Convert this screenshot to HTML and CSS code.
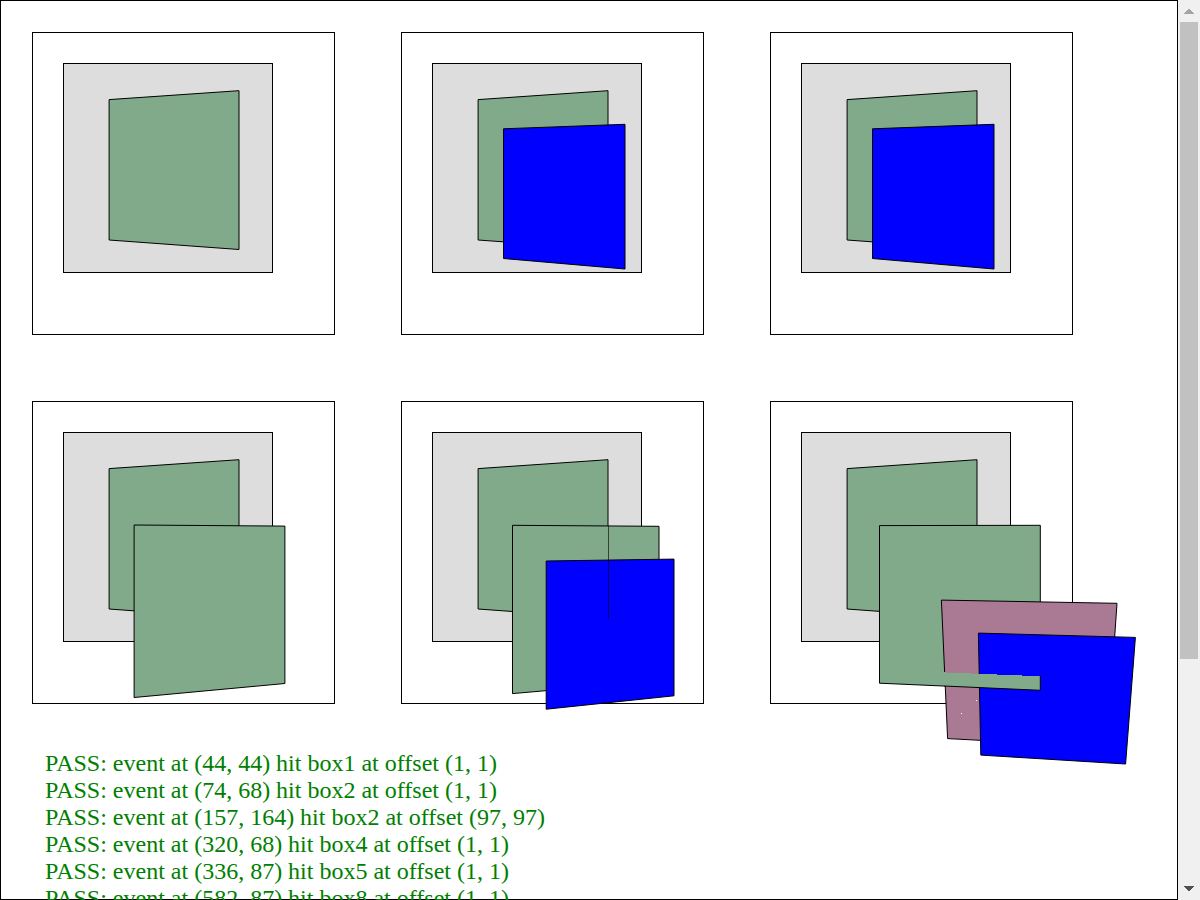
FILE: index.html
```html
<!DOCTYPE html>
<html lang="en">
<head>
<meta charset="utf-8">
<title>3D hit testing</title>
<link rel="stylesheet" href="styles.css">
</head>
<body>
<div class="viewport">
  <main class="page">
    <section class="frames" aria-label="Test boxes">
      <div class="frame">
        <svg class="scene" viewBox="1 1 301 301" aria-hidden="true">
          <defs>
            <g id="base">
              <rect class="plane" x="31.5" y="31.5" width="209" height="209"/>
              <path class="green" d="M77.1 67.6 207 58.7V217.5L77.1 208Z"/>
            </g>
            <path id="near" class="blue" d="M102.5 96.8 224 92.3V237L102.5 226.5Z"/>
          </defs>
          <use href="#base"/>
        </svg>
      </div>
      <div class="frame">
        <svg class="scene" viewBox="1 1 301 301" aria-hidden="true">
          <use href="#base"/>
          <use href="#near"/>
        </svg>
      </div>
      <div class="frame">
        <svg class="scene" viewBox="1 1 301 301" aria-hidden="true">
          <use href="#base"/>
          <use href="#near"/>
        </svg>
      </div>
      <div class="frame">
        <svg class="scene" viewBox="1 1 301 301" aria-hidden="true">
          <use href="#base"/>
          <path class="green" d="M102.1 124 252.9 125.1V282.5L102.1 296.5Z"/>
        </svg>
      </div>
      <div class="frame">
        <svg class="scene" viewBox="1 1 301 301" aria-hidden="true">
          <use href="#base"/>
          <path class="green" d="M111.5 124.3 258 125.3V279.8L111.5 292.6Z"/>
          <path class="blue" d="M145.2 160 273 158.1V294.8L145.2 308.2Z"/>
          <path class="seam" d="M207.5 125V218"/>
        </svg>
      </div>
      <div class="frame">
        <svg class="scene" viewBox="1 1 301 301" aria-hidden="true">
          <use href="#base"/>
          <path class="green" d="M109.5 124.6 270.3 124.3V289.3L109.5 282.2Z"/>
          <path class="pink" d="M171.4 199.1 347 202.3 337 346 177.6 337.6Z"/>
          <path class="blue" d="M208.4 232.1 365.4 236.4 355.6 363 210.8 354.1Z"/>
          <path class="strip" d="M174 271H176V272H201V273H227V274H252V275H270.3V289.3L174 285Z"/>
          <path class="edge" d="M270.3 275V289.3L174 285"/>
          <path class="speck" d="M191 312h1v1h-1zM206 299h1v1h-1z"/>
        </svg>
      </div>
    </section>
    <section class="results" aria-label="Results">
      <p class="pass">PASS: event at (44, 44) hit box1 at offset (1, 1)</p>
      <p class="pass">PASS: event at (74, 68) hit box2 at offset (1, 1)</p>
      <p class="pass">PASS: event at (157, 164) hit box2 at offset (97, 97)</p>
      <p class="pass">PASS: event at (320, 68) hit box4 at offset (1, 1)</p>
      <p class="pass">PASS: event at (336, 87) hit box5 at offset (1, 1)</p>
      <p class="pass">PASS: event at (582, 87) hit box8 at offset (1, 1)</p>
    </section>
  </main>
  <div class="scrollbar" aria-hidden="true">
    <svg class="arrow arrow-up" viewBox="0 0 10 5"><path d="M4 0h2v1h1v1h1v1h1v1h1v1H0V4h1V3h1V2h1V1h1z"/></svg>
    <div class="track"><div class="thumb"></div></div>
    <svg class="arrow" viewBox="0 0 10 5"><path d="M0 0h10v1H9v1H8v1H7v1H6v1H4V4H3V3H2V2H1V1H0z"/></svg>
  </div>
</div>
</body>
</html>
```
FILE: styles.css
```css
* {
  box-sizing: border-box;
}

body {
  margin: 0;
  background: #fff;
  font-family: "Liberation Serif", "Times New Roman", serif;
}

.viewport {
  display: flex;
  height: 100vh;
  overflow: hidden;
}

.page {
  flex: 1;
  min-width: 0;
  border: 1px solid #000;
  padding: 31px;
}

.frames {
  display: flex;
  flex-wrap: wrap;
  gap: 66px;
}

.frame {
  width: 303px;
  border: 1px solid #000;
}

.scene {
  display: block;
  width: 100%;
  overflow: visible;
}

.plane,
.green,
.pink,
.blue {
  stroke: #000;
  stroke-width: 1px;
}

.plane {
  fill: #ddd;
}

.green,
.strip {
  fill: #81aa8a;
}

.pink {
  fill: #aa7994;
}

.blue {
  fill: #00f;
}

.seam {
  stroke: #000;
  stroke-opacity: 0.6;
}

.edge {
  fill: none;
  stroke: #000;
}

.speck {
  fill: #fff;
}

.results {
  position: relative;
  margin-top: 46px;
  padding-left: 13px;
}

.pass {
  margin: 0;
  color: #008000;
  font-size: 24px;
  line-height: 27px;
}

.scrollbar {
  display: flex;
  flex-direction: column;
  align-items: center;
  width: 22px;
  padding: 9px 2px;
  background: #f0f0f0;
}

.track {
  flex: 1;
  width: 100%;
  margin: 8px 0;
}

.thumb {
  width: 18px;
  height: 74.4%;
  background: #c1c1c1;
}

.arrow {
  width: 10px;
  height: 5px;
  fill: #505050;
}

.arrow-up {
  fill: #a3a3a3;
}
```
